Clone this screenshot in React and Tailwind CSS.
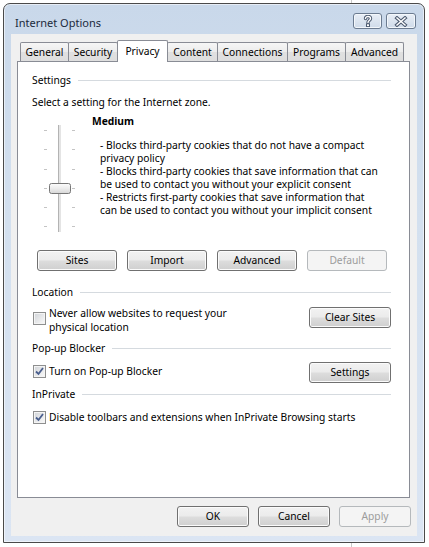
import React from "react"

const tabs = [
    { label: "General", w: "w-[49px]" },
    { label: "Security", w: "w-[50px]" },
    { label: "Privacy", w: "w-[51px]", active: true },
    { label: "Content", w: "w-[51px]" },
    { label: "Connections", w: "w-[71px]" },
    { label: "Programs", w: "w-[59px]" },
    { label: "Advanced", w: "w-[59px]" },
]

const lines = [
    "- Blocks third-party cookies that do not have a compact",
    "privacy policy",
    "- Blocks third-party cookies that save information that can",
    "be used to contact you without your explicit consent",
    "- Restricts first-party cookies that save information that",
    "can be used to contact you without your implicit consent",
]

function Btn({ children, w = "w-[80px]", disabled }) {
    return (
        <div
            className={
                disabled
                    ? `${w} h-[21px] shrink-0 flex items-center justify-center rounded-[3px] border border-[#b5b9bc] bg-[#f4f4f4] text-[#9c9c9c]`
                    : `${w} h-[21px] shrink-0 flex items-center justify-center rounded-[3px] border border-[#707070] bg-[linear-gradient(#f2f2f2_0%,#ebebeb_48%,#dddddd_52%,#cfcfcf_100%)] shadow-[inset_0_0_0_1px_#fbfbfb] text-black`
            }
        >
            {children}
        </div>
    )
}

function Check({ checked }) {
    return (
        <div className="w-[13px] h-[13px] shrink-0 border border-[#8e8f8f] bg-[#f4f4f4] p-px">
            <div className="w-full h-full bg-[linear-gradient(135deg,#d4d7db,#f7f7f7)] flex items-center justify-center">
                {checked && (
                    <svg width="9" height="9" viewBox="0 0 9 9">
                        <path d="M1 4.5 L3.5 7 L8 1" fill="none" stroke="#4a5f8e" strokeWidth="1.8" />
                    </svg>
                )}
            </div>
        </div>
    )
}

function Group({ label }) {
    return (
        <div className="flex items-center gap-[7px] h-[15px]">
            <span className="whitespace-nowrap">{label}</span>
            <div className="flex-1 h-px bg-[#d5dadf]" />
        </div>
    )
}

function Slider() {
    const ticks = [16.5, 35.5, 55.5, 74.5, 93.5, 112.5]
    return (
        <svg width="40" height="120" viewBox="0 0 40 120" className="shrink-0 ml-[8px]">
            <defs>
                <linearGradient id="thumb" x1="0" y1="0" x2="0" y2="1">
                    <stop offset="0" stopColor="#fdfdfd" />
                    <stop offset="0.5" stopColor="#ececec" />
                    <stop offset="1" stopColor="#d6d6d6" />
                </linearGradient>
            </defs>
            {ticks.map(y => (
                <g key={y} stroke="#c4c4c4">
                    <line x1="4" y1={y} x2="7" y2={y} />
                    <line x1="32" y1={y} x2="35" y2={y} />
                </g>
            ))}
            <rect x="18" y="11" width="3" height="107" fill="#e4e4e4" />
            <line x1="18.5" y1="11" x2="18.5" y2="118" stroke="#b3b3b3" />
            <rect x="9.5" y="69.5" width="21" height="10" rx="2" fill="url(#thumb)" stroke="#777" />
        </svg>
    )
}

function Caption({ children, w }) {
    return (
        <div className={`${w} h-[16px] rounded-[3px] border border-[#6b7b90] bg-[linear-gradient(#e8eef6,#cfdbe9)] shadow-[inset_0_0_0_1px_#f3f7fb] flex items-center justify-center`}>
            {children}
        </div>
    )
}

export default function App() {
    return (
        <div className="relative w-[429px] h-[547px] bg-white overflow-hidden font-['Noto_Sans',sans-serif] text-[10.25px] leading-[15px] text-black">
            <div className="absolute left-[351px] top-0 w-px h-[4px] bg-[#c9c9c9]" />
            <div className="absolute left-[351px] bottom-0 w-px h-[5px] bg-[#c9c9c9]" />

            <div className="relative ml-[3px] mt-[3px] w-[422px] h-[540px] border border-[#4a4a4a] rounded-t-[7px] bg-[linear-gradient(#c9d8ea,#d3e0ef_40%,#dbe5f3)] shadow-[inset_0_0_0_1px_rgba(255,255,255,0.55)] flex flex-col">
                <div className="h-[30px] flex items-start">
                    <div className="ml-[11px] mt-[11px] text-[11px] text-[#1b2a3c]">Internet Options</div>
                    <div className="ml-auto mr-[8px] mt-[9px] flex gap-[4px]">
                        <Caption w="w-[29px]">
                            <svg width="10" height="12" viewBox="0 0 10 12">
                                <g fill="none" strokeLinecap="round">
                                    <path d="M2.5 3.5 C2.5 0.8 7.5 0.8 7.5 3.5 C7.5 5.5 5 5.5 5 7.5" stroke="#4d5b70" strokeWidth="3.4" />
                                    <path d="M2.5 3.5 C2.5 0.8 7.5 0.8 7.5 3.5 C7.5 5.5 5 5.5 5 7.5" stroke="#fff" strokeWidth="1.4" />
                                </g>
                                <rect x="3.5" y="8.8" width="3" height="2.8" fill="#fff" stroke="#4d5b70" />
                            </svg>
                        </Caption>
                        <Caption w="w-[30px]">
                            <svg width="14" height="11" viewBox="0 0 14 11">
                                <g strokeLinecap="square">
                                    <path d="M3 2 L11 9 M11 2 L3 9" stroke="#4d5b70" strokeWidth="3.6" />
                                    <path d="M3 2 L11 9 M11 2 L3 9" stroke="#fff" strokeWidth="1.5" />
                                </g>
                            </svg>
                        </Caption>
                    </div>
                </div>

                <div className="mx-[7px] h-[502px] bg-[#f0f0f0] flex flex-col">
                    <div className="ml-[6px] mt-[6px] w-[393px]">
                        <div className="relative z-10 flex items-end h-[22px] pl-[3px] -mb-px">
                            {tabs.map((t, i) => (
                                <div
                                    key={t.label}
                                    className={
                                        t.active
                                            ? `${t.w} ${i ? "-ml-px" : ""} relative z-10 h-[22px] pt-[3px] flex justify-center rounded-t-[2px] border border-b-0 border-[#898c95] bg-white`
                                            : `${t.w} ${i ? "-ml-px" : ""} h-[19px] mb-px flex items-center justify-center rounded-t-[2px] border border-b-0 border-[#898c95] bg-[linear-gradient(#f6f6f6,#ececec_50%,#e0e0e0_51%,#dedede)]`
                                    }
                                >
                                    {t.label}
                                </div>
                            ))}
                        </div>

                        <div className="h-[437px] border border-[#898c95] bg-white pl-[14px] pr-[18px] pt-[11px] flex flex-col">
                            <Group label="Settings" />
                            <div className="mt-[7px]">Select a setting for the Internet zone.</div>

                            <div className="mt-[4px] flex">
                                <Slider />
                                <div className="ml-[12px] flex flex-col">
                                    <div className="font-bold">Medium</div>
                                    <div className="mt-[10px] ml-[8px] leading-[13px]">
                                        {lines.map(l => (
                                            <div key={l} className="whitespace-nowrap">{l}</div>
                                        ))}
                                    </div>
                                </div>
                            </div>

                            <div className="mt-[16px] ml-[5px] flex gap-[10px]">
                                <Btn>Sites</Btn>
                                <Btn>Import</Btn>
                                <Btn>Advanced</Btn>
                                <Btn disabled>Default</Btn>
                            </div>

                            <div className="mt-[14px]">
                                <Group label="Location" />
                            </div>
                            <div className="mt-[6px] flex items-start">
                                <div className="ml-px mt-[6px]">
                                    <Check />
                                </div>
                                <div className="ml-[3px] leading-[14px]">
                                    <div>Never allow websites to request your</div>
                                    <div>physical location</div>
                                </div>
                                <div className="ml-auto mt-px">
                                    <Btn w="w-[82px]">Clear Sites</Btn>
                                </div>
                            </div>

                            <div className="mt-[7px]">
                                <Group label="Pop-up Blocker" />
                            </div>
                            <div className="mt-[6px] flex items-start">
                                <div className="mt-[2px] flex items-center h-[15px]">
                                    <div className="ml-px">
                                        <Check checked />
                                    </div>
                                    <span className="ml-[3px]">Turn on Pop-up Blocker</span>
                                </div>
                                <div className="ml-auto">
                                    <Btn w="w-[82px]">Settings</Btn>
                                </div>
                            </div>

                            <div className="mt-[4px]">
                                <Group label="InPrivate" />
                            </div>
                            <div className="mt-[8px] flex items-center h-[15px]">
                                <div className="ml-px">
                                    <Check checked />
                                </div>
                                <span className="ml-[3px] whitespace-nowrap">Disable toolbars and extensions when InPrivate Browsing starts</span>
                            </div>
                        </div>
                    </div>

                    <div className="mt-[8px] pr-[6px] flex justify-end gap-[9px]">
                        <Btn w="w-[72px]">OK</Btn>
                        <Btn w="w-[72px]">Cancel</Btn>
                        <Btn w="w-[72px]" disabled>Apply</Btn>
                    </div>
                </div>
            </div>
        </div>
    )
}
